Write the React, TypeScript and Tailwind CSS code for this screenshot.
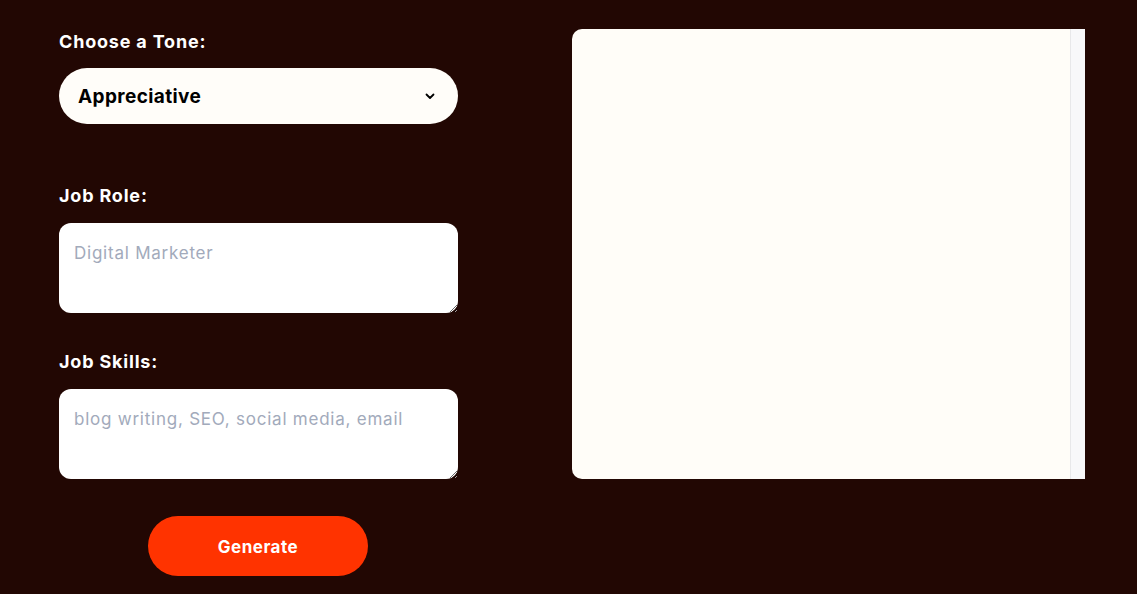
import { useState } from 'react';

const tones = ['Appreciative', 'Professional', 'Friendly', 'Enthusiastic', 'Formal'];

const Chevron = () => (
  <svg
    className="pointer-events-none absolute right-[23px] top-1/2 -translate-y-1/2"
    width="10"
    height="10"
    viewBox="0 0 10 10"
    fill="none"
  >
    <path d="M1.5 3.5 L5 7 L8.5 3.5" stroke="#000" strokeWidth="1.8" strokeLinecap="round" strokeLinejoin="round" />
  </svg>
);

const Label = ({ children }: { children: string }) => (
  <label className="block text-[18px] leading-[26px] font-bold tracking-[0.045em] text-white">{children}</label>
);

export default function App() {
  const [tone, setTone] = useState('Appreciative');

  return (
    <div className="min-h-screen w-full bg-[#220703] font-['Inter','Liberation_Sans',sans-serif]">
      <div className="flex items-start pl-[59px] pt-[29px]">
        <form className="flex w-[399px] flex-col" onSubmit={(e) => e.preventDefault()}>
          <Label>Choose a Tone:</Label>
          <div className="relative mt-[13px]">
            <select
              value={tone}
              onChange={(e) => setTone(e.target.value)}
              className="h-[56px] w-full appearance-none rounded-full bg-[#fffdf9] pt-[2px] pl-[19px] pr-10 text-[19px] font-bold tracking-[0.02em] text-black outline-none"
            >
              {tones.map((t) => (
                <option key={t}>{t}</option>
              ))}
            </select>
            <Chevron />
          </div>

          <div className="mt-[59px]">
            <Label>Job Role:</Label>
          </div>
          <textarea
            placeholder="Digital Marketer"
            className="mt-[14px] h-[90px] w-full rounded-[12px] bg-white px-[15px] pt-[18px] pb-[16px] text-[17px] leading-[24px] tracking-[0.045em] text-gray-800 outline-none placeholder:text-[#a2aabb]"
          />

          <div className="mt-[36px]">
            <Label>Job Skills:</Label>
          </div>
          <textarea
            placeholder="blog writing, SEO, social media, email"
            className="mt-[14px] h-[90px] w-full rounded-[12px] bg-white px-[15px] pt-[18px] pb-[16px] text-[17px] leading-[24px] tracking-[0.045em] text-gray-800 outline-none placeholder:text-[#a2aabb]"
          />

          <div className="mt-[37px] flex justify-center">
            <button
              type="submit"
              className="-ml-px h-[60px] w-[220px] rounded-full bg-[#ff3300] pt-[3px] text-[17px] font-bold tracking-[0.03em] text-white"
            >
              Generate
            </button>
          </div>
        </form>

        <div className="ml-[114px] flex h-[450px] w-[513px] overflow-hidden rounded-l-[10px] bg-[#fffdf8]">
          <div className="flex-1" />
          <div className="w-[15px] border-l border-[#e8e8ea] bg-[#f8f8fa]" />
        </div>
      </div>
    </div>
  );
}
